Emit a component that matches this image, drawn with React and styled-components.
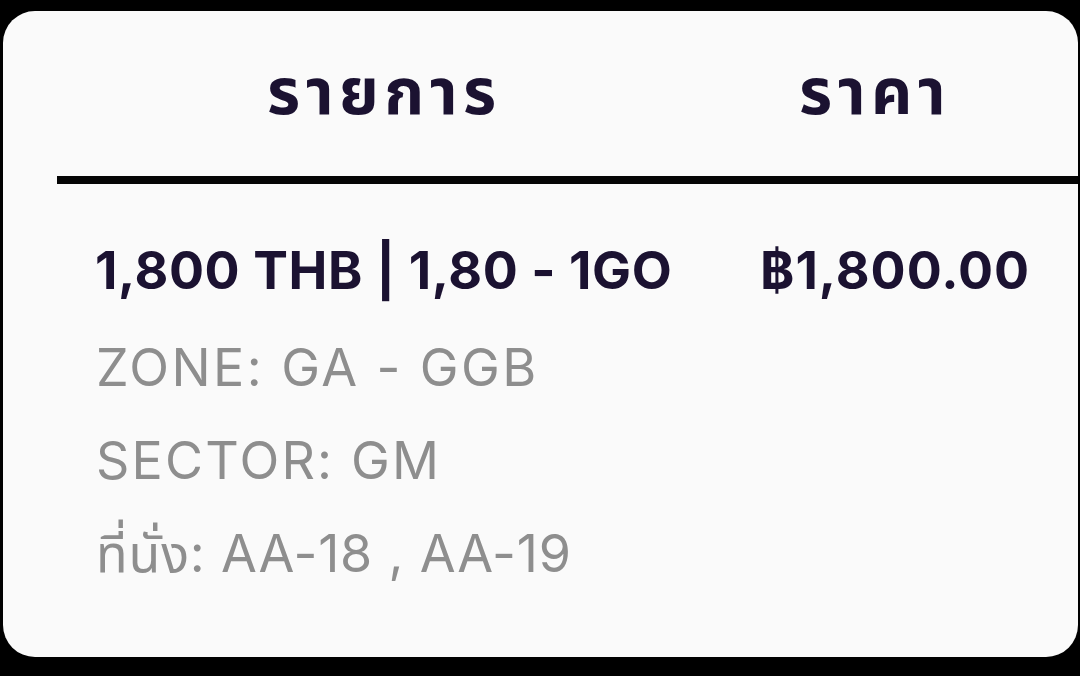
import React from "react";
import styled, { createGlobalStyle } from "styled-components";

const Global = createGlobalStyle`
  html, body { margin: 0; padding: 0; background: #000; }
  body { width: 1080px; height: 676px; overflow: hidden; font-family: Inter, "Noto Sans", "Noto Sans Thai", sans-serif; }
`;

const Card = styled.div`
  margin: 11px 2px 0 3px;
  height: 646px;
  background: #fafafa;
  border-radius: 32px;
  padding-left: 54px;
  box-sizing: border-box;
  overflow: hidden;
`;

const Grid = styled.div`
  display: grid;
  grid-template-columns: 703px 1fr;
`;

const HeadRow = styled(Grid)`
  height: 165px;
  border-bottom: 8px solid #050505;
  align-items: center;
`;

const HeadCell = styled.div`
  padding-left: ${(p) => p.$pl}px;
  padding-bottom: 6px;
  font-size: 64px;
  font-weight: 700;
  letter-spacing: 5.5px;
  color: #1b1231;
  line-height: 1;
`;

const Body = styled.div`
  padding-top: 57px;
  display: flex;
  flex-direction: column;
`;

const ItemRow = styled(Grid)`
  align-items: baseline;
`;

const Title = styled.div`
  padding-left: ${(p) => p.$pl}px;
  font-size: 52px;
  font-weight: 700;
  letter-spacing: ${(p) => p.$ls}px;
  color: #1b1231;
  line-height: 60px;
  white-space: nowrap;
`;

const Details = styled.div`
  margin-top: 20px;
  display: flex;
  flex-direction: column;
`;

const Detail = styled.div`
  padding-left: 39px;
  font-size: 52px;
  font-weight: 400;
  letter-spacing: ${(p) => p.$ls}px;
  color: #8e8e8e;
  line-height: 93px;
  white-space: nowrap;
`;

export default function App() {
  return (
    <>
      <Global />
      <Card>
        <HeadRow>
          <HeadCell $pl={210}>รายการ</HeadCell>
          <HeadCell $pl={39}>ราคา</HeadCell>
        </HeadRow>
        <Body>
          <ItemRow>
            <Title $pl={38} $ls={0.6}>1,800 THB | 1,80 - 1GO</Title>
            <Title $pl={0} $ls={1}>฿1,800.00</Title>
          </ItemRow>
          <Details>
            <Detail $ls={2.4}>ZONE: GA - GGB</Detail>
            <Detail $ls={2.2}>SECTOR: GM</Detail>
            <Detail $ls={0.8}>ที่นั่ง: AA-18 , AA-19</Detail>
          </Details>
        </Body>
      </Card>
    </>
  );
}
